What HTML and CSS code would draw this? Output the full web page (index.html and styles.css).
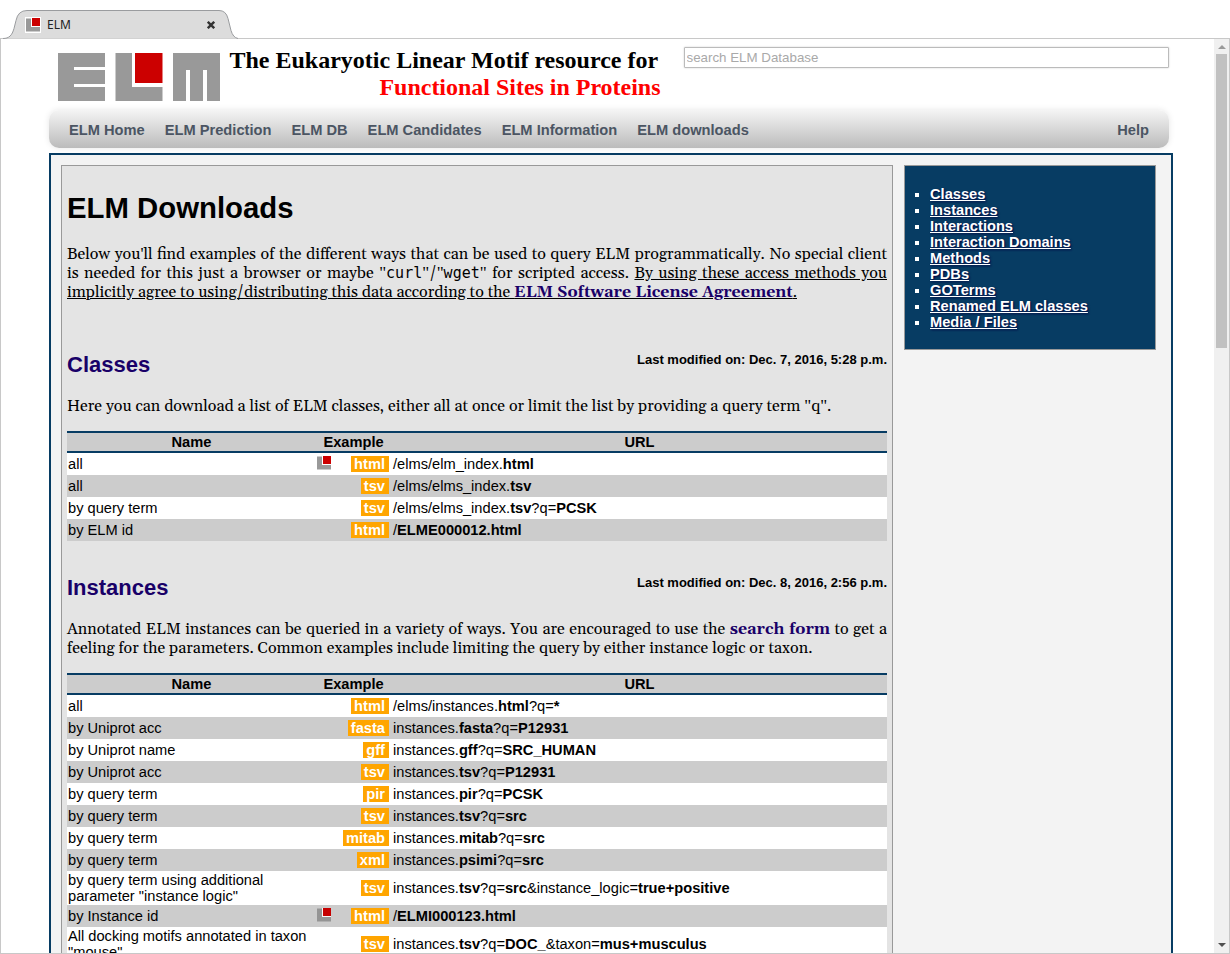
FILE: index.html
```html
<!DOCTYPE html>
<html lang="en">
<head>
<meta charset="utf-8">
<title>ELM</title>
<link rel="stylesheet" href="styles.css">
</head>
<body>
<svg width="0" height="0" class="defs">
  <symbol id="mark" viewBox="0 0 14 14">
    <path class="mark-l" d="M0 .5h5V9h9v4.5H0z"/>
    <path fill="#fff" d="M5 0h9v9H5z"/>
    <path fill="#c00" d="M6 0h8v8H6z"/>
  </symbol>
</svg>
<div class="tabbar">
  <svg class="tab-shape" width="240" height="29" viewBox="0 0 240 29">
    <path d="M3 28.5c6 0 9-3 11-10l2-8Q18 .5 27 .5h192q7 0 9 8l3 12q2 7 7 8" fill="#dcdcdc" stroke="#9a9c9f"/>
  </svg>
  <div class="tab-content">
    <span class="favicon"><svg width="14" height="14"><use href="#mark"/></svg></span>
    <span class="tab-title">ELM</span>
    <svg class="tab-close" width="8" height="8" viewBox="0 0 8 8"><path d="M.8.8l6.4 6.4M7.2.8L.8 7.2" stroke="#333" stroke-width="2.4"/></svg>
  </div>
</div>
<div class="window">
  <div class="page">
    <header class="header">
      <svg class="logo" width="163" height="48" viewBox="0 0 163 48">
        <path fill="#999" d="M0 0h47v14H16v3h31v14H16v3h31v14H0zM57.500 0h16.500v34h30.500v14H57.500zM115 0h47v48h-13V17h-4v31h-13V17h-4v31h-13z"/>
        <path fill="#c00" d="M77 0h27.500v30H77z"/>
      </svg>
      <div class="slogan"><div class="line1">The Eukaryotic Linear Motif resource for</div><div class="line2">Functional Sites in Proteins</div></div>
      <input class="search" placeholder="search ELM Database">
    </header>
    <nav class="nav"><a>ELM Home</a><a>ELM Prediction</a><a>ELM DB</a><a>ELM Candidates</a><a>ELM Information</a><a>ELM downloads</a><a class="help">Help</a></nav>
    <div class="container">
      <main class="main">
        <h1>ELM Downloads</h1>
        <p class="intro"><span class="full">Below you<em>'</em>ll find examples of the different ways that can be used to query ELM programmatically. No special client</span><span class="full">is needed for this just a browser or maybe <em>"</em><code>curl</code><em>"</em>/<em>"</em><code>wget</code><em>"</em> for scripted access. <u>By using these access methods you</u></span><span class="part w730"><u>implicitly agree to using/distributing this data according to the <b>ELM Software License Agreement</b>.</u></span></p>
        <section class="classes">
          <div class="section-head"><h2>Classes</h2><span>Last modified on: Dec. 7, 2016, 5:28 p.m.</span></div>
          <p><span class="part w763">Here you can download a list of ELM classes, either all at once or limit the list by providing a query term <em>"</em>q<em>"</em>.</span></p>
          <table>
            <tr><th class="c1">Name</th><th class="c2">Example</th><th>URL</th></tr>
            <tr><td>all</td><td><div class="ex"><svg class="mark" width="14" height="14"><use href="#mark"/></svg><i>html</i></div></td><td>/elms/elm_index.<b>html</b></td></tr>
            <tr><td>all</td><td><div class="ex"><i>tsv</i></div></td><td>/elms/elms_index.<b>tsv</b></td></tr>
            <tr><td>by query term</td><td><div class="ex"><i>tsv</i></div></td><td>/elms/elms_index.<b>tsv</b>?q=<b>PCSK</b></td></tr>
            <tr><td>by ELM id</td><td><div class="ex"><i>html</i></div></td><td>/<b>ELME000012.html</b></td></tr>
          </table>
        </section>
        <section>
          <div class="section-head"><h2>Instances</h2><span>Last modified on: Dec. 8, 2016, 2:56 p.m.</span></div>
          <p><span class="full">Annotated ELM instances can be queried in a variety of ways. You are encouraged to use the <b>search form</b> to get a</span><span class="part w745">feeling for the parameters. Common examples include limiting the query by either instance logic or taxon.</span></p>
          <table>
            <tr><th class="c1">Name</th><th class="c2">Example</th><th>URL</th></tr>
            <tr><td>all</td><td><div class="ex"><i>html</i></div></td><td>/elms/instances.<b>html</b>?q=<b>*</b></td></tr>
            <tr><td>by Uniprot acc</td><td><div class="ex"><i>fasta</i></div></td><td>instances.<b>fasta</b>?q=<b>P12931</b></td></tr>
            <tr><td>by Uniprot name</td><td><div class="ex"><i>gff</i></div></td><td>instances.<b>gff</b>?q=<b>SRC_HUMAN</b></td></tr>
            <tr><td>by Uniprot acc</td><td><div class="ex"><i>tsv</i></div></td><td>instances.<b>tsv</b>?q=<b>P12931</b></td></tr>
            <tr><td>by query term</td><td><div class="ex"><i>pir</i></div></td><td>instances.<b>pir</b>?q=<b>PCSK</b></td></tr>
            <tr><td>by query term</td><td><div class="ex"><i>tsv</i></div></td><td>instances.<b>tsv</b>?q=<b>src</b></td></tr>
            <tr><td>by query term</td><td><div class="ex"><i>mitab</i></div></td><td>instances.<b>mitab</b>?q=<b>src</b></td></tr>
            <tr><td>by query term</td><td><div class="ex"><i>xml</i></div></td><td>instances.<b>psimi</b>?q=<b>src</b></td></tr>
            <tr><td>by query term using additional<br>parameter "instance logic"</td><td><div class="ex"><i>tsv</i></div></td><td>instances.<b>tsv</b>?q=<b>src</b>&amp;instance_logic=<b>true+positive</b></td></tr>
            <tr><td>by Instance id</td><td><div class="ex"><svg class="mark dark" width="14" height="14"><use href="#mark"/></svg><i>html</i></div></td><td>/<b>ELMI000123.html</b></td></tr>
            <tr><td>All docking motifs annotated in taxon<br>"mouse"</td><td><div class="ex"><i>tsv</i></div></td><td>instances.<b>tsv</b>?q=<b>DOC_</b>&amp;taxon=<b>mus+musculus</b></td></tr>
          </table>
        </section>
      </main>
      <aside class="sidebar">
        <ul><li><a>Classes</a></li><li><a>Instances</a></li><li><a>Interactions</a></li><li><a>Interaction Domains</a></li><li><a>Methods</a></li><li><a>PDBs</a></li><li><a>GOTerms</a></li><li><a>Renamed ELM classes</a></li><li><a>Media / Files</a></li></ul>
      </aside>
    </div>
  </div>
  <div class="scrollbar">
    <svg width="8" height="4" viewBox="0 0 8 4"><path d="M0 4l4-4 4 4z" fill="#999"/></svg>
    <div class="thumb"></div>
    <svg class="down" width="8" height="4" viewBox="0 0 8 4"><path d="M0 0h8L4 4z" fill="#505050"/></svg>
  </div>
</div>
</body>
</html>
```
FILE: styles.css
```css
* { box-sizing: border-box; }
body {
  margin: 0;
  height: 954px;
  overflow: hidden;
  background: #fff;
  color: #000;
  font: 14.65px/16px "Liberation Sans", Arial, sans-serif;
}
.defs { position: absolute; }
.mark-l { fill: #999; }
.tabbar { height: 38px; padding: 10px 0 0 0; display: grid; }
.tab-shape, .tab-content { grid-area: 1 / 1; }
.tab-content { display: flex; align-items: center; width: 216px; height: 29px; padding-left: 25px; z-index: 1; }
.favicon { background: #fff; width: 16px; height: 16px; padding: 1px; }
.favicon svg { display: block; }
.tab-title { font: 12px "Noto Sans", sans-serif; margin-left: 6px; color: #222; flex: 1; }
.tab-close { margin-right: 1px; }
.window { height: 916px; border: 1px solid #c8c8c8; display: flex; overflow: hidden; }
.page { width: 1213px; padding-left: 48px; }
.header { height: 71px; display: flex; align-items: flex-start; padding-left: 9px; }
.logo { margin-top: 14px; }
.slogan { width: 431px; margin: 8px 0 0 8.500px; font: bold 24px/27px "Liberation Serif", "Times New Roman", serif; white-space: nowrap; }
.line2 { color: #f00; text-align: right; letter-spacing: -.02px; }
.search {
  width: 485px; height: 21px; margin: 8px 0 0 23px; padding: 0 2px 1px;
  border: 1px solid #bbb; border-radius: 1px; box-shadow: 0 0 2px #ccc;
  font: 13.333px "Liberation Sans", Arial, sans-serif;
}
.search::placeholder { color: #a9a9a9; }
.nav {
  width: 1120px; height: 38px; padding: 2px 20px 0; display: flex; gap: 20px; align-items: center;
  border-radius: 10px; background: linear-gradient(#f4f4f4, #bbb);
  box-shadow: 0 0 6px rgba(0,0,0,.1);
  color: #4b5563; font-weight: bold; font-size: 14.667px; white-space: nowrap;
}
.help { margin-left: auto; }
.container { width: 1124px; height: 900px; margin-top: 5px; border: 2px solid #073c63; background: #f3f3f3; padding: 10px; display: flex; gap: 11px; align-items: flex-start; }
.main { width: 832px; height: 890px; border: 1px solid #999; background: #e4e4e4; padding: 0 5px; }
h1 { font-size: 29.333px; line-height: 34px; margin: 25px 0 20px; }
h2 { font-size: 22px; line-height: 25px; margin: 0; color: #190068; }
p { margin: 0; font: 16px/19px Georgia, Gelasio, "Liberation Serif", serif; }
p span { display: block; white-space: nowrap; text-align: justify; text-align-last: justify; }
p b { color: #190068; }
p em { font: 17px/1 "Liberation Serif", serif; }
code { font: 15px "DejaVu Sans Mono", monospace; line-height: 1; }
.w730 { width: 730px; }
.w763 { width: 763px; }
.w745 { width: 745px; }
.intro { height: 57px; margin-bottom: 50px; }
.section-head { display: flex; justify-content: space-between; }
.section-head span { font-size: 13px; font-weight: bold; }
.section-head + p { margin: 20px 0 15px; }
.classes { margin-bottom: 34px; }
table { width: 820px; border-collapse: separate; border-spacing: 0; table-layout: fixed; background: #fff; }
th { height: 22px; padding: 0 0 0 1px; border: solid #073c63; border-width: 2px 0; }
.c1 { width: 248px; }
.c2 { width: 76px; }
tr { background: #fff; }
tr:nth-child(odd) { background: #ccc; }
td { height: 22px; padding: 1px; vertical-align: middle; white-space: nowrap; }
td:last-child { padding-left: 2px; }
.ex { display: flex; justify-content: flex-end; align-items: center; padding-right: 1px; }
.ex i { font-style: normal; font-weight: bold; color: #fff; background: #ffa500; padding: 0 4px 0 3px; height: 16px; }
.mark { margin: -3px auto 0 1px; }
.dark { filter: brightness(.97); }
.sidebar { width: 252px; height: 185px; border: 1px solid #999; background: #073c63; color: #fff; }
ul { margin: 20px 0 0; padding: 0 0 0 25px; list-style: square; font-weight: bold; }
li a { text-decoration: underline; text-shadow: 1px 1px 2px #000040; }
.scrollbar { width: 15px; background: #f0f0f0; display: flex; flex-direction: column; align-items: center; padding-top: 6px; }
.thumb { width: 11px; height: 294px; margin-top: 5px; background: #c1c1c1; }
.down { margin: auto 0 6px; }
```
